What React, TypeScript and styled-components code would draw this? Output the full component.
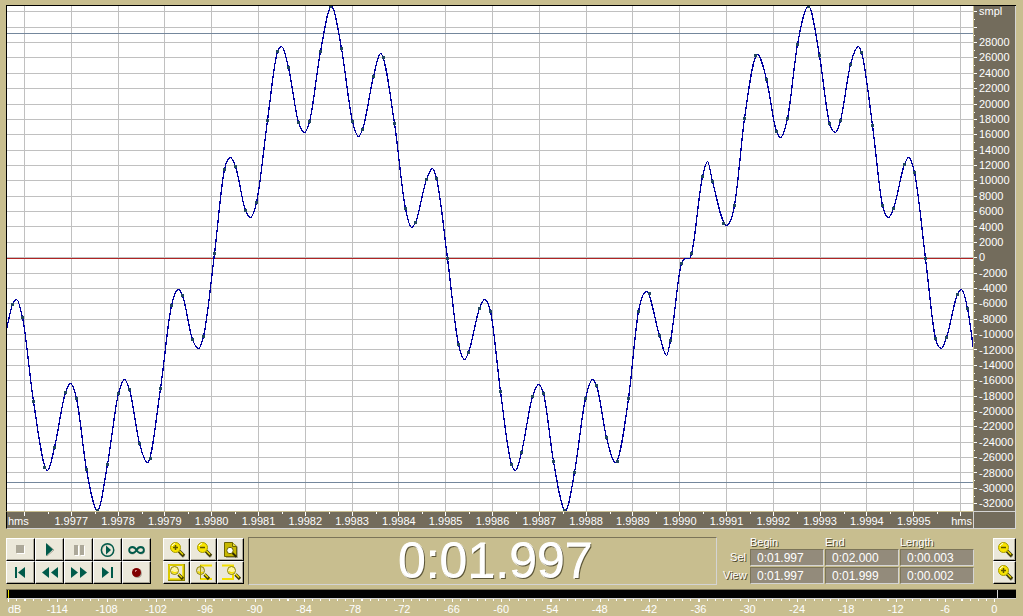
import React from 'react';
import styled, { createGlobalStyle, css } from 'styled-components';

const tan = '#c8be8f';
const ruler = '#736c5c';
const light = '#d4d4d4';
const shade = '#7b7458';
const green = '#005a4a';

const GlobalStyle = createGlobalStyle`
  * { box-sizing: border-box; }
  body {
    margin: 0;
    background: ${tan};
    color: #fff;
    font: 11px/14px "Liberation Sans", Arial, sans-serif;
  }
`;

const Editor = styled.main`
  display: flex;
  flex-direction: column;
  min-height: 100vh;
  padding: 5px 0 1px 6px;
`;

/* ---------- wave view ---------- */

const WaveFrame = styled.section`
  flex: 1;
  display: grid;
  grid-template-columns: minmax(0, 1fr) 43px;
  grid-template-rows: minmax(380px, 1fr) 18px;
  margin-right: 7px;
  border-top: 1px solid #000;
`;

const Plot = styled.div`
  position: relative;
  border-left: 1px solid #000;
  border-right: 1px solid ${tan};
  background: #fff;
  margin-right: -1px;
  min-height: 0;
`;

const PlotSvg = styled.svg`
  position: absolute;
  inset: 0;
  display: block;
  width: 100%;
  height: 100%;
  shape-rendering: crispEdges;
`;

const LevelRuler = styled.div`
  display: flex;
  margin-left: 1px;
  min-height: 0;
  background: ${ruler};
  border-right: 1px solid ${light};
`;

const LevelTicks = styled.svg`
  display: block;
  width: 3px;
  height: 100%;
  shape-rendering: crispEdges;
`;

const LevelLabels = styled.div`
  flex: 1;
  display: grid;
  grid-template-rows: 24fr repeat(31, 13fr);
  padding-left: 2px;
`;

const LevelLabel = styled.span<{ $top?: boolean }>`
  display: flex;
  align-items: ${(p) => (p.$top ? 'flex-start' : 'center')};
  min-height: 0;
  line-height: ${(p) => (p.$top ? '11px' : '0')};
`;

const TimeRuler = styled.div`
  border-top: 1px solid ${tan};
  border-bottom: 1px solid ${light};
  border-left: 1px solid #000;
  background: ${ruler};
`;

const TimeTicks = styled.svg`
  display: block;
  width: 100%;
  height: 4px;
  shape-rendering: crispEdges;
`;

const TimeLabels = styled.div`
  display: grid;
  grid-template-columns: 41fr repeat(19, 47fr) 36fr;
  line-height: 11px;
  text-align: center;
`;

const EdgeLabel = styled.span<{ $end?: boolean }>`
  text-align: ${(p) => (p.$end ? 'right' : 'left')};
  padding: 0 1px;
`;

const Corner = styled.div`
  background: ${ruler};
  border: 1px solid ${light};
`;

/* ---------- lower panel ---------- */

const Panel = styled.section`
  display: flex;
  align-items: flex-start;
  margin: 8px 7px 4px 0;
`;

const ButtonGrid = styled.div<{ $cols: number; $size: number }>`
  display: grid;
  grid-template-columns: repeat(${(p) => p.$cols}, ${(p) => p.$size}px);
  grid-auto-rows: 23px;
  margin-top: 1px;
`;

const ToolButton = styled.button`
  display: flex;
  align-items: center;
  justify-content: center;
  padding: 0;
  border: solid;
  border-width: 1px;
  border-color: #fff #000 #000 #fff;
  background: #ebe8da;
  box-shadow: inset -1px -1px 0 #aca899;
  svg { display: block; overflow: visible; }
`;

const sunken = css`
  border: 1px solid;
  border-color: ${shade} ${light} ${light} ${shade};
`;

const TimeDisplay = styled.output`
  ${sunken}
  flex: 1;
  margin: 0 6px 0 4px;
  padding-left: 26px;
  height: 48px;
  font-size: 50px;
  line-height: 46px;
  text-align: center;
  text-shadow: 1px 1px 0 #5c5638;
  -webkit-text-stroke: 1px #fff;
  paint-order: stroke fill;
`;

const ZoomGroup = styled(ButtonGrid)`
  margin-left: 12px;
`;

const Readout = styled.div`
  display: grid;
  grid-template-columns: 26px repeat(3, 74px);
  grid-template-rows: 11px 17px 17px;
  column-gap: 1px;
  row-gap: 1px;
  align-items: center;
`;

const ReadoutLabel = styled.span<{ $right?: boolean }>`
  text-align: ${(p) => (p.$right ? 'right' : 'left')};
  padding-right: ${(p) => (p.$right ? '3px' : '0')};
  text-shadow: 1px 1px 0 #4c462c;
  line-height: 11px;
`;

const TimeField = styled.input`
  ${sunken}
  width: 100%;
  height: 17px;
  padding: 0 6px;
  background: #938b7b;
  color: #fff;
  font: 12px/15px "Liberation Sans", Arial, sans-serif;
`;

const VerticalZoom = styled(ButtonGrid)`
  margin-left: 19px;
`;

/* ---------- level meter ---------- */

const Meter = styled.div`
  display: flex;
  height: 10px;
  margin-right: 7px;
  padding: 0 18px 0 1px;
  justify-content: space-between;
  background: #000;
  border-top: 1px solid ${shade};
  border-left: 1px solid ${shade};
  border-bottom: 1px solid ${light};
`;

const MeterMark = styled.i<{ $color: string }>`
  width: 1px;
  background: ${(p) => p.$color};
`;

const MeterScale = styled.div`
  padding: 0 4px 0 2px;
`;

const MeterTicks = styled.svg`
  display: block;
  width: 100%;
  height: 3px;
  shape-rendering: crispEdges;
`;

const MeterLabels = styled.div`
  display: grid;
  grid-template-columns: 1fr repeat(20, 2fr);
  line-height: 13px;
  text-align: center;
  margin-top: 1px;
`;

const MeterUnit = styled.span`
  text-align: left;
`;

/* ---------- waveform data ---------- */

type Point = [number, number, boolean?];

// [x, y] are audio samples, entries flagged true are turning points of the curve
const T = true;
const wave: Point[] = [
  [6, 329, T], [12, 304], [16, 299, T], [22, 317], [33, 401], [44, 467], [47, 470, T], [54, 447], [65, 392],
  [70, 383, T], [76, 398], [86, 469], [97, 510, T], [107, 464], [118, 393], [124, 379, T], [129, 389],
  [139, 443], [147, 462, T], [150, 458], [160, 388], [171, 305], [178, 289, T], [182, 295], [192, 339],
  [198, 348, T], [203, 336], [214, 253], [224, 169], [230, 157, T], [235, 166], [245, 210], [250, 217, T],
  [256, 202], [267, 120], [277, 51], [281, 46, T], [288, 67], [298, 122], [304, 132, T], [309, 121],
  [320, 51], [331, 6, T], [341, 48], [352, 121], [358, 136, T], [362, 129], [373, 76], [380, 53, T],
  [383, 57], [394, 123], [405, 208], [411, 227, T], [415, 222], [426, 179], [432, 168, T], [436, 178],
  [447, 258], [458, 344], [464, 359, T], [468, 352], [479, 308], [484, 299, T], [490, 311], [500, 391],
  [511, 464], [515, 470, T], [521, 452], [532, 396], [538, 384, T], [543, 393], [553, 461], [565, 510, T],
  [574, 472], [585, 398], [592, 379, T], [596, 385], [606, 437], [615, 462, T], [617, 461], [628, 398],
  [638, 311], [646, 291, T], [649, 293], [659, 335], [666, 355, T], [670, 340], [681, 263],
  [685, 258, T], [689, 258, T], [691, 253], [702, 176], [707, 161, T], [712, 181], [723, 223],
  [726, 225, T], [734, 205], [744, 118], [755, 55], [757, 54, T], [766, 79], [776, 131], [780, 137, T],
  [787, 118], [797, 44], [808, 6, T], [819, 55], [829, 123], [835, 132, T], [840, 120], [850, 64],
  [858, 46, T], [861, 52], [872, 125], [882, 205], [888, 217, T], [893, 208], [904, 164], [908, 157, T],
  [914, 172], [925, 258], [935, 338], [941, 348, T], [946, 337], [957, 294], [961, 289, T], [967, 308],
  [974, 356],
];

// samples that fall exactly on a crest or a trough
const crestSamples: Point[] = [[97, 510], [330, 6], [564, 510], [808, 6]];

// samples right beside a turning point would flatten the curve there
const turns = wave.filter((p) => p[2]);
const knots = wave.filter(
  (p) => p[2] || !turns.some((t) => Math.abs(t[0] - p[0]) < 5 && Math.abs(t[1] - p[1]) < 5),
);

// monotone cubic interpolation: passes through every point without overshoot
function curve(points: Point[]): string {
  const slope = points.map((p, i) => {
    if (i === 0 || i === points.length - 1) {
      const a = points[i === 0 ? 0 : i - 1];
      const b = points[i === 0 ? 1 : i];
      return (b[1] - a[1]) / (b[0] - a[0]);
    }
    const [x0, y0] = points[i - 1];
    const [x2, y2] = points[i + 1];
    const h0 = p[0] - x0;
    const h1 = x2 - p[0];
    const d0 = (p[1] - y0) / h0;
    const d1 = (y2 - p[1]) / h1;
    if (d0 * d1 <= 0) return 0;
    const m = (d0 * h1 + d1 * h0) / (h0 + h1);
    return Math.sign(m) * Math.min(Math.abs(m), 3 * Math.abs(d0), 3 * Math.abs(d1));
  });
  let d = `M${points[0][0]} ${points[0][1]}`;
  for (let i = 1; i < points.length; i++) {
    const [x0, y0] = points[i - 1];
    const [x1, y1] = points[i];
    const h = (x1 - x0) / 3;
    d += `C${x0 + h} ${y0 + slope[i - 1] * h} ${x1 - h} ${y1 - slope[i] * h} ${x1} ${y1}`;
  }
  return d;
}

const range = (n: number) => Array.from({ length: n }, (_, i) => i);
const gridX = range(21).map((i) => Math.round(24 + i * 46.8));
const gridY = range(33).map((i) => Math.round(11.3 + i * 15.37));
const levels = range(31).map((i) => 28000 - i * 2000);
const times = range(19).map((i) => (1.9977 + i * 0.0001).toFixed(4));
const decibels = range(20).map((i) => -114 + i * 6);

/* ---------- icons ---------- */

const Triangle = ({ x = 0, left = false, h = 11 }: { x?: number; left?: boolean; h?: number }) => (
  <path d={left ? `M${x + 7} 0V${h}L${x} ${h / 2}Z` : `M${x} 0V${h}L${x + 7} ${h / 2}Z`} fill={green} />
);

const StopIcon = () => (
  <svg width="9" height="9"><path d="M1 1h8v8h-8z" fill="#fff" /><path d="M0 0h8v8h-8z" fill="#aca899" /></svg>
);
const PlayIcon = () => (
  <svg width="8" height="13">
    <path d="M1 1L8 7L1 13" fill="none" stroke="#aca899" />
    <path d="M0 0V13L7 6.500Z" fill={green} />
  </svg>
);
const PauseIcon = () => (
  <svg width="10" height="10">
    <path d="M1 1h4v10h-4zM7 1h4v10h-4z" fill="#fff" />
    <path d="M0 0h4v10h-4zM6 0h4v10h-4z" fill="#aca899" />
  </svg>
);
const LoopPlayIcon = () => (
  <svg width="15" height="14">
    <circle cx="8" cy="7.500" r="6" fill="none" stroke="#aca899" />
    <circle cx="7.500" cy="7" r="6.200" fill="none" stroke={green} strokeWidth="1.400" />
    <path d="M6 2.500V11.500L11 7Z" fill={green} />
  </svg>
);
const InfinityIcon = () => (
  <svg width="17" height="8">
    <path d="M9 5C7 2 6 2 4.500 2C0.500 2 0.500 8 4.500 8C6.500 8 7 7 9 5C11 2 12 2 13.500 2C17.500 2 17.500 8 13.500 8C12 8 11 7 9 5Z" fill="none" stroke="#aca899" />
    <path d="M8.500 4C7 1.500 6 1 4.500 1C0 1 0 7 4.500 7C6 7 7 6.500 8.500 4C10 1.500 11 1 12.500 1C17 1 17 7 12.500 7C11 7 10 6.500 8.500 4Z" fill="none" stroke={green} strokeWidth="1.800" />
  </svg>
);
const StartIcon = () => (
  <svg width="11" height="11"><path d="M0 0h2v11h-2z" fill={green} /><Triangle x={3} left /></svg>
);
const RewindIcon = () => (
  <svg width="16" height="11"><Triangle left /><Triangle x={9} left /></svg>
);
const ForwardIcon = () => (
  <svg width="16" height="11"><Triangle /><Triangle x={9} /></svg>
);
const EndIcon = () => (
  <svg width="11" height="11"><Triangle /><path d="M9 0h2v11h-2z" fill={green} /></svg>
);
const RecordIcon = () => (
  <svg width="10" height="10">
    <circle cx="5.500" cy="5.500" r="4.500" fill="#aca899" />
    <circle cx="4.500" cy="4.500" r="4.500" fill="#800000" />
    <path d="M3 2h2v1h-1v1h-1z" fill="#d08080" />
  </svg>
);

const Lens = ({ sign }: { sign: '+' | '-' }) => (
  <g>
    <path d="M10 11L14 15" stroke="#aca899" strokeWidth="3" />
    <path d="M9 9L14 14" stroke="#403c00" strokeWidth="3.500" />
    <path d="M9.500 9L13 12.500" stroke="#f4e000" strokeWidth="1.200" />
    <circle cx="5.500" cy="5.500" r="5" fill="#f8e400" stroke="#a89c00" />
    <path d="M2 4Q3 2 5 1.500" fill="none" stroke="#fff" />
    <path d={sign === '+' ? 'M3 5.500h5M5.500 3v5' : 'M3 5.500h5'} stroke="#5c5400" strokeWidth="1.500" />
  </g>
);
const SmallLens = ({ fill = '#fff6a0' }: { fill?: string }) => (
  <g>
    <path d="M8.500 8.500L13 13" stroke="#403c00" strokeWidth="3.200" />
    <path d="M8.500 8L12 11.500" stroke="#f4e000" strokeWidth="1.200" />
    <circle cx="4.500" cy="4.500" r="4" fill={fill} stroke="#8a8000" />
    <path d="M2 5.500Q4 8 7 6" fill="none" stroke="#f4e000" strokeWidth="1.500" />
  </g>
);
const ZoomInIcon = () => <svg width="14" height="15"><Lens sign="+" /></svg>;
const ZoomOutIcon = () => <svg width="14" height="15"><Lens sign="-" /></svg>;
const ZoomFullIcon = () => (
  <svg width="14" height="16">
    <path d="M2 2h9l3 3v11h-12z" fill="#aca899" />
    <path d="M0.500 0.500h8l4 4v10h-12z" fill="#c8b800" stroke="#6c6400" />
    <path d="M8.500 0.500v4h4" fill="#e8dc40" stroke="#6c6400" />
    <path d="M8 10.500L12.500 15" stroke="#302c00" strokeWidth="2" />
    <circle cx="6" cy="8.500" r="3.200" fill="#fff" stroke="#6c6400" />
  </svg>
);
const ZoomSelectionIcon = () => (
  <svg width="17" height="17">
    <path d="M1 1h15v15h-15z" fill="none" stroke="#8a8000" strokeWidth="2" />
    <path d="M1 1h14v14h-14z" fill="none" stroke="#f4e000" strokeWidth="1.500" />
    <g transform="translate(2 2)"><SmallLens /></g>
  </svg>
);
const ZoomLeftIcon = () => (
  <svg width="17" height="17">
    <path d="M5 1.500H17M5 15H17" stroke="#f4e000" strokeWidth="2" />
    <g transform="translate(1 2)"><SmallLens fill="#e8dfa8" /></g>
    <path d="M5.500 1v14" stroke="#a89c00" />
  </svg>
);
const ZoomRightIcon = () => (
  <svg width="17" height="17">
    <path d="M0 1.500H11V15H0" fill="none" stroke="#f4e000" strokeWidth="2" />
    <g transform="translate(5 2)"><SmallLens /></g>
  </svg>
);

const transport = [
  { name: 'Stop', Icon: StopIcon, disabled: true },
  { name: 'Play', Icon: PlayIcon },
  { name: 'Pause', Icon: PauseIcon, disabled: true },
  { name: 'Play to end', Icon: LoopPlayIcon },
  { name: 'Play looped', Icon: InfinityIcon },
  { name: 'Go to beginning', Icon: StartIcon },
  { name: 'Rewind', Icon: RewindIcon },
  { name: 'Fast forward', Icon: ForwardIcon },
  { name: 'Go to end', Icon: EndIcon },
  { name: 'Record', Icon: RecordIcon },
];

const zoomTools = [
  { name: 'Zoom in', Icon: ZoomInIcon },
  { name: 'Zoom out', Icon: ZoomOutIcon },
  { name: 'Zoom out full', Icon: ZoomFullIcon },
  { name: 'Zoom to selection', Icon: ZoomSelectionIcon },
  { name: 'Zoom to left edge', Icon: ZoomLeftIcon },
  { name: 'Zoom to right edge', Icon: ZoomRightIcon },
];

const readout = [
  { id: 'sel', label: 'Sel', values: ['0:01.997', '0:02.000', '0:00.003'] },
  { id: 'view', label: 'View', values: ['0:01.997', '0:01.999', '0:00.002'] },
];
const readoutColumns = ['Begin', 'End', 'Length'];

function Waveform() {
  return (
    <Plot>
      <PlotSvg viewBox="7 6 966 505" preserveAspectRatio="none" role="img" aria-label="Waveform">
        {gridX.map((x) => <rect key={x} x={x} y="6" width="1" height="505" fill="#c0c0c0" />)}
        {gridY.map((y) => <rect key={y} x="7" y={y} width="966" height="1" fill="#c0c0c0" />)}
        <rect x="7" y="33" width="966" height="1" fill="#74879c" />
        <rect x="7" y="482" width="966" height="1" fill="#74879c" />
        <rect x="7" y="258" width="966" height="1" fill="#b02424" />
        <g transform="translate(0.5 0.5)">
          <path d={curve(knots)} fill="none" stroke="#0000a0" strokeWidth="1.300" vectorEffect="non-scaling-stroke" />
        </g>
        {[...wave.filter((p) => !p[2]), ...crestSamples].map(([x, y]) => (
          <rect key={x} x={x - 1} y={y - 1} width="3" height="3" fill="#204860" />
        ))}
      </PlotSvg>
    </Plot>
  );
}

export default function App() {
  return (
    <>
      <GlobalStyle />
      <Editor>
        <WaveFrame>
          <Waveform />
          <LevelRuler>
            <LevelTicks viewBox="0 6 3 505" preserveAspectRatio="none">
              {gridY.map((y) => (
                <React.Fragment key={y}>
                  <rect x="0" y={y} width="3" height="1" fill="#fff" />
                  <rect x="0" y={y + 8} width="1" height="1" fill="#fff" />
                </React.Fragment>
              ))}
            </LevelTicks>
            <LevelLabels>
              <LevelLabel $top>smpl</LevelLabel>
              {levels.map((v) => <LevelLabel key={v}>{v}</LevelLabel>)}
            </LevelLabels>
          </LevelRuler>
          <TimeRuler>
            <TimeTicks viewBox="7 0 966 4" preserveAspectRatio="none">
              {gridX.map((x) => (
                <React.Fragment key={x}>
                  <rect x={x} y="0" width="1" height="4" fill="#fff" />
                  {x < 950 && <rect x={x + 24} y="0" width="1" height="2" fill="#fff" />}
                </React.Fragment>
              ))}
            </TimeTicks>
            <TimeLabels>
              <EdgeLabel>hms</EdgeLabel>
              {times.map((t) => <span key={t}>{t}</span>)}
              <EdgeLabel $end>hms</EdgeLabel>
            </TimeLabels>
          </TimeRuler>
          <Corner />
        </WaveFrame>

        <Panel>
          <ButtonGrid $cols={5} $size={29}>
            {transport.map(({ name, Icon, disabled }) => (
              <ToolButton key={name} aria-label={name} disabled={disabled}><Icon /></ToolButton>
            ))}
          </ButtonGrid>
          <ZoomGroup $cols={3} $size={27}>
            {zoomTools.map(({ name, Icon }) => (
              <ToolButton key={name} aria-label={name}><Icon /></ToolButton>
            ))}
          </ZoomGroup>
          <TimeDisplay>0:01.997</TimeDisplay>
          <Readout>
            <span />
            {readoutColumns.map((c) => <ReadoutLabel key={c} id={c}>{c}</ReadoutLabel>)}
            {readout.map((row) => (
              <React.Fragment key={row.id}>
                <ReadoutLabel $right id={row.id}>{row.label}</ReadoutLabel>
                {row.values.map((v, i) => (
                  <TimeField key={readoutColumns[i]} defaultValue={v} aria-labelledby={`${row.id} ${readoutColumns[i]}`} />
                ))}
              </React.Fragment>
            ))}
          </Readout>
          <VerticalZoom $cols={1} $size={23}>
            <ToolButton aria-label="Zoom out vertically"><ZoomOutIcon /></ToolButton>
            <ToolButton aria-label="Zoom in vertically"><ZoomInIcon /></ToolButton>
          </VerticalZoom>
        </Panel>

        <Meter>
          <MeterMark $color="#e8e000" />
          <MeterMark $color={light} />
        </Meter>
        <MeterScale>
          <MeterTicks viewBox="0 0 1230 3" preserveAspectRatio="none">
            {range(121).map((i) => (
              <rect key={i} x={i * 10} y="0" width="1.300" height={i % 6 ? 2 : 3} fill="#fff" />
            ))}
          </MeterTicks>
          <MeterLabels>
            <MeterUnit>dB</MeterUnit>
            {decibels.map((v) => <span key={v}>{v}</span>)}
          </MeterLabels>
        </MeterScale>
      </Editor>
    </>
  );
}
